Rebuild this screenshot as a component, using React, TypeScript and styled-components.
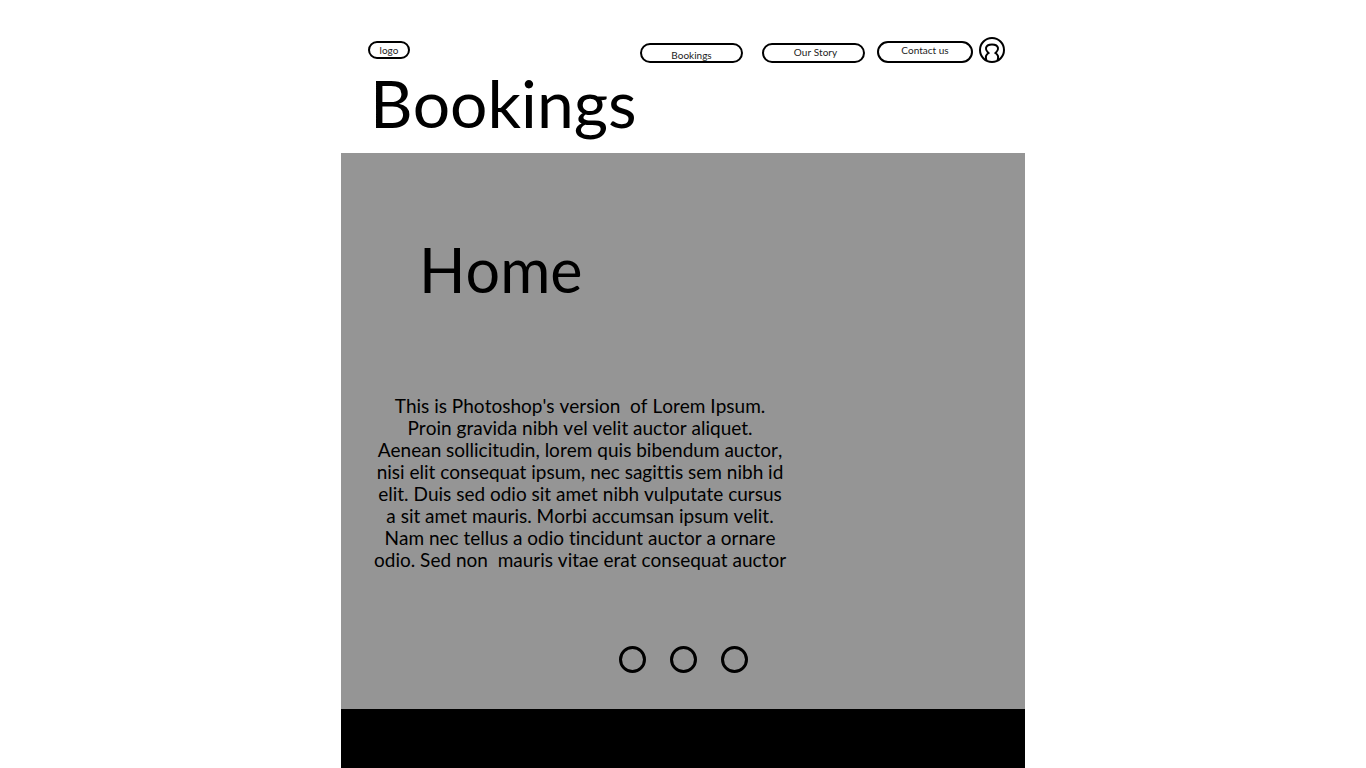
import React from "react";
import styled, { createGlobalStyle } from "styled-components";

const GlobalStyle = createGlobalStyle`
  * {
    box-sizing: border-box;
  }
  body {
    margin: 0;
    background: #ffffff;
    color: #000000;
    font-family: Lato, "Liberation Sans", sans-serif;
    font-kerning: none;
    font-variant-ligatures: none;
  }
`;

const Page = styled.div`
  display: flex;
  flex-direction: column;
  max-width: 684px;
  min-height: 100vh;
  margin: 0 auto;
`;

const Header = styled.header`
  padding: 37px 20px 10px 27px;
`;

const TopBar = styled.div`
  display: flex;
  justify-content: space-between;
  align-items: center;
`;

const Nav = styled.nav`
  display: flex;
  align-items: flex-end;
`;

const Pill = styled.a<{ $width: number; $height: number; $pad?: string; $gap?: number }>`
  display: flex;
  justify-content: center;
  align-items: center;
  width: ${(p) => p.$width}px;
  height: ${(p) => p.$height}px;
  margin-right: ${(p) => p.$gap ?? 0}px;
  padding: ${(p) => p.$pad ?? "0"};
  border: 2px solid #000000;
  border-radius: 12px;
  color: #1c1c1c;
  font-size: 10px;
  line-height: 12px;
  text-decoration: none;
  white-space: nowrap;
`;

const AccountButton = styled.button`
  display: flex;
  padding: 0;
  border: 0;
  background: none;
  cursor: pointer;
`;

const PageTitle = styled.h1`
  margin: 0 0 0 2px;
  font-size: 66px;
  font-weight: 400;
  line-height: 80px;
`;

const Hero = styled.main`
  padding: 81px 33px 36px;
  background: #959595;
`;

const HeroTitle = styled.h2`
  margin: 0 0 89px 45px;
  font-size: 61px;
  font-weight: 400;
  line-height: 72px;
`;

const HeroText = styled.p`
  max-width: 412px;
  margin: 0;
  font-size: 19px;
  line-height: 22px;
  text-align: center;
  white-space: pre;
`;

const Dots = styled.div`
  display: flex;
  justify-content: center;
  gap: 24px;
  margin-top: 75px;
`;

const Dot = styled.button`
  width: 27px;
  height: 27px;
  padding: 0;
  border: 3px solid #000000;
  border-radius: 50%;
  background: none;
  cursor: pointer;
`;

const Footer = styled.footer`
  flex: 1;
  min-height: 59px;
  background: #000000;
`;

const copy = [
  "This is Photoshop's version  of Lorem Ipsum.",
  "Proin gravida nibh vel velit auctor aliquet.",
  "Aenean sollicitudin, lorem quis bibendum auctor,",
  "nisi elit consequat ipsum, nec sagittis sem nibh id",
  "elit. Duis sed odio sit amet nibh vulputate cursus",
  "a sit amet mauris. Morbi accumsan ipsum velit.",
  "Nam nec tellus a odio tincidunt auctor a ornare",
  "odio. Sed non  mauris vitae erat consequat auctor",
].join("\n");

function AccountIcon() {
  return (
    <svg width="26" height="26" viewBox="0 0 26 26" fill="none" stroke="#000000" strokeWidth="2" aria-hidden="true">
      <circle cx="13" cy="13" r="12" />
      <path d="M7.500 23.500C6.300 20.500 6.600 17.800 9.500 16C8 14.500 6.500 13.500 7 11C7.500 8.300 9.500 7.500 13 7.500C16.500 7.500 18.500 8.300 19 11C19.500 13.500 18 14.500 16.500 16C19.400 17.800 19.700 20.500 18.500 23.500" />
    </svg>
  );
}

export default function App() {
  return (
    <>
      <GlobalStyle />
      <Page>
        <Header>
          <TopBar>
            <Pill href="#home" $width={42} $height={18}>logo</Pill>
            <Nav aria-label="Main">
              <Pill href="#bookings" $width={103} $height={20} $pad="3px 0 0" $gap={19}>Bookings</Pill>
              <Pill href="#our-story" $width={103} $height={20} $pad="0 0 2px 4px" $gap={12}>Our Story</Pill>
              <Pill href="#contact" $width={96} $height={22} $pad="0 0 4px" $gap={6}>Contact us</Pill>
              <AccountButton type="button" aria-label="Account">
                <AccountIcon />
              </AccountButton>
            </Nav>
          </TopBar>
          <PageTitle>Bookings</PageTitle>
        </Header>
        <Hero>
          <HeroTitle>Home</HeroTitle>
          <HeroText>{copy}</HeroText>
          <Dots>
            <Dot type="button" aria-label="Slide 1" />
            <Dot type="button" aria-label="Slide 2" />
            <Dot type="button" aria-label="Slide 3" />
          </Dots>
        </Hero>
        <Footer />
      </Page>
    </>
  );
}
